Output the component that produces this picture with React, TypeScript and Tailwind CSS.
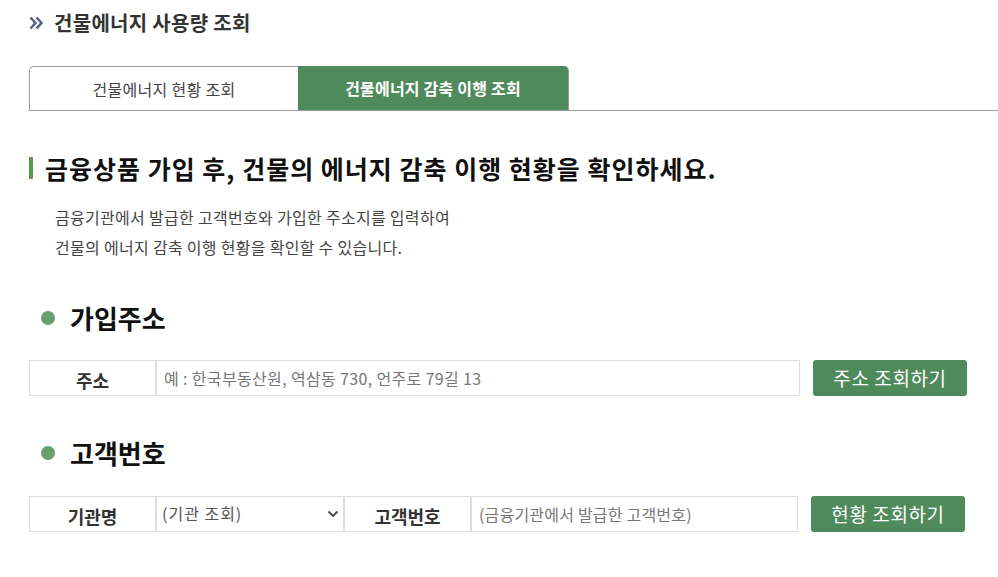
import React from "react";

const font = { fontFamily: '"Noto Sans CJK KR", "Noto Sans", sans-serif' };

function Dot() {
  return <span className="inline-block w-[14px] h-[14px] rounded-full bg-[#66a06c] mr-[15px] ml-[41px]" />;
}

export default function App() {
  return (
    <div className="w-[998px] h-[577px] bg-white overflow-hidden" style={font}>
      {/* page title */}
      <div className="h-[46px] flex items-center pl-[29px]">
        <svg width="15" height="14" viewBox="0 0 15 14" className="mr-[10px]">
          <path d="M1.5 1.5 L6.5 7 L1.5 12.5" fill="none" stroke="#56617d" strokeWidth="2.6" />
          <path d="M7.5 1.5 L12.5 7 L7.5 12.5" fill="none" stroke="#56617d" strokeWidth="2.6" />
        </svg>
        <span className="text-[20px] font-bold text-[#333] tracking-[0.3px]">건물에너지 사용량 조회</span>
      </div>

      {/* tabs */}
      <div className="mt-[20px] ml-[29px] h-[45px] flex border-b border-[#999]">
        <div className="w-[269px] h-[44px] flex items-center justify-center border-t border-l border-[#999] rounded-tl-[5px] text-[16px] tracking-[0.3px] text-[#444]">
          건물에너지 현황 조회
        </div>
        <div className="w-[271px] h-[44px] flex items-center justify-center bg-[#4f8a5c] border-r border-[#8aa08f] rounded-tr-[5px] text-[16px] tracking-[0.2px] font-bold text-white">
          건물에너지 감축 이행 조회
        </div>
      </div>

      {/* heading */}
      <div className="mt-[41px] ml-[29px] h-[32px] flex items-center">
        <span className="inline-block w-[4px] h-[22px] bg-[#5b9a4b] mr-[12px]" />
        <span className="text-[25px] leading-[32px] font-bold text-[#111] tracking-[1px]">
          금융상품 가입 후, 건물의 에너지 감축 이행 현황을 확인하세요.
        </span>
      </div>

      <div className="mt-[18px] ml-[55px] text-[16px] leading-[30px] text-[#444] tracking-[0.3px]">
        <p>금융기관에서 발급한 고객번호와 가입한 주소지를 입력하여</p>
        <p>건물의 에너지 감축 이행 현황을 확인할 수 있습니다.</p>
      </div>

      {/* 가입주소 */}
      <div className="mt-[39px] h-[34px] flex items-center">
        <Dot />
        <span className="text-[26px] leading-[34px] font-bold text-[#111]">가입주소</span>
      </div>

      <div className="mt-[25px] ml-[29px] flex items-center h-[36px]">
        <div className="w-[127px] h-[36px] border border-[#ddd] flex items-center justify-center pt-[4px] text-[18px] font-bold text-[#333]">
          주소
        </div>
        <div className="w-[644px] h-[36px] border border-[#ddd] flex items-center pl-[7px] text-[16px] tracking-[0.35px] text-[#777]">
          예 : 한국부동산원, 역삼동 730, 언주로 79길 13
        </div>
        <button className="ml-[13px] w-[154px] h-[36px] rounded-[3px] bg-[#4f8a5c] text-white text-[19px] tracking-[0.6px] flex items-center justify-center">
          주소 조회하기
        </button>
      </div>

      {/* 고객번호 */}
      <div className="mt-[40px] h-[34px] flex items-center">
        <Dot />
        <span className="text-[26px] leading-[34px] font-bold text-[#111]">고객번호</span>
      </div>

      <div className="mt-[26px] ml-[29px] flex items-center h-[36px]">
        <div className="w-[127px] h-[36px] border border-[#ddd] flex items-center justify-center pt-[4px] text-[18px] font-bold text-[#333]">
          기관명
        </div>
        <div className="w-[188px] h-[36px] border border-[#ddd] flex items-center justify-between pl-[5px] pr-[4px] text-[16px] text-[#555] tracking-[1px]">
          <span className="-mt-[2px]">(기관 조회)</span>
          <svg width="12" height="8" viewBox="0 0 12 8">
            <path d="M1.5 1.5 L6 6 L10.5 1.5" fill="none" stroke="#444" strokeWidth="1.8" />
          </svg>
        </div>
        <div className="w-[127px] h-[36px] border border-[#ddd] flex items-center justify-center pt-[4px] text-[18px] font-bold text-[#333]">
          고객번호
        </div>
        <div className="w-[327px] h-[36px] border border-[#ddd] flex items-center pl-[7px] text-[16px] tracking-[0.2px] text-[#777]">
          (금융기관에서 발급한 고객번호)
        </div>
        <button className="ml-[13px] w-[154px] h-[36px] rounded-[3px] bg-[#4f8a5c] text-white text-[19px] tracking-[0.6px] flex items-center justify-center">
          현황 조회하기
        </button>
      </div>
    </div>
  );
}
